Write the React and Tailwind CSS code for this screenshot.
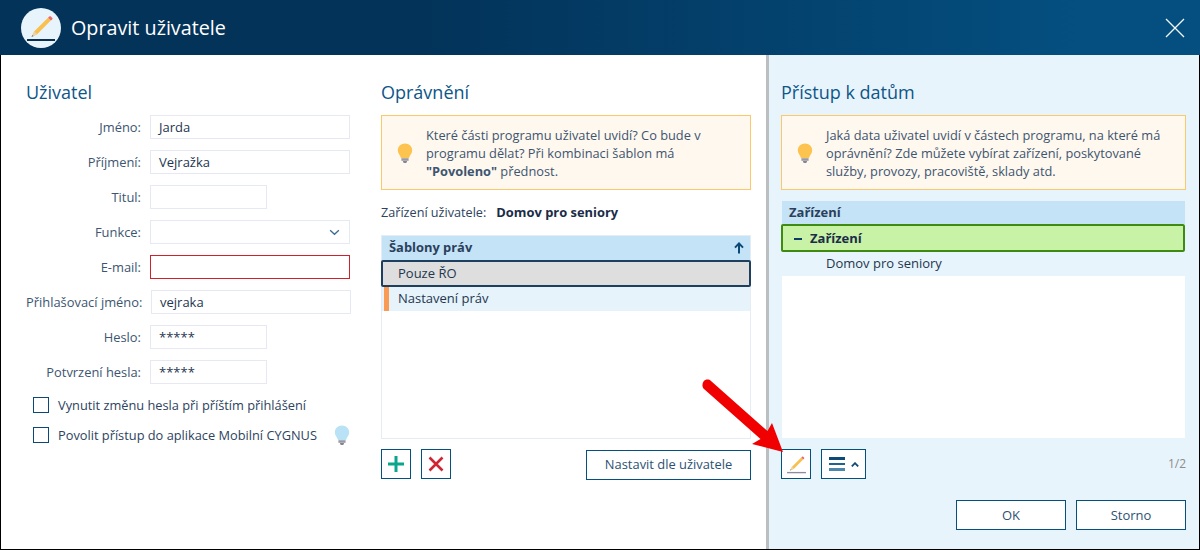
import React from "react";

const Bulb = ({ color = "#fcc34f", className = "" }) => (
  <svg viewBox="0 0 16 21" className={className}>
    <path d="M8 .5C3.8.5.8 3.5.8 7.3c0 3.3 2.4 4.8 3.2 7.7h8c.8-2.9 3.2-4.4 3.2-7.7C15.2 3.5 12.2.5 8 .5z" fill={color} />
    <path d="M4.4 15.2h7.2v2.6H4.4z" fill="#9a9aa6" />
    <path d="M5.8 18h4.4l-.9 2H6.7z" fill="#85858f" />
  </svg>
);

const Pencil = ({ className = "", line = "#8f8aa0", w = 1 }) => (
  <svg viewBox="0 0 40 40" className={className}>
    <path d="M10.5 29l2.8-5.8L27 9.8l2.8 2.8L16.2 26.2z" fill="#f8c04e" />
    <path d="M13.3 23.2l2.9 3L10.5 29z" fill="#e9d6a8" />
    <path d="M10.5 29l.9-2.1 1.2 1.2z" fill="#6b7a8c" />
    <path d="M27 9.8l1.3-1.3c.5-.5 1.1-.5 1.6 0l1.3 1.3c.5.5.5 1.1 0 1.6l-1.4 1.2z" fill="#ee6a6a" />
    <rect x="6" y="31" width="28" height={w + 1} fill={line} />
  </svg>
);

const Label = ({ children }) => (
  <label className="w-[115px] text-right text-[12.9px] leading-6 text-[#3d5570] shrink-0 whitespace-nowrap">{children}</label>
);

const Input = ({ value = "", className = "w-[200px]", ml = "ml-[9px]", red = false, children }) => (
  <div
    className={`${className} ${ml} h-6 border ${red ? "border-[#d0202c]" : "border-[#e6e9f3]"} bg-white pl-2 pr-2 pt-px flex items-center justify-between text-[13px] text-[#24364f]`}
  >
    <span>{value}</span>
    {children}
  </div>
);

const Row = ({ label, ...rest }) => (
  <div className="flex h-6">
    <Label>{label}</Label>
    <Input {...rest} />
  </div>
);

const Check = ({ label, children }) => (
  <div className="flex items-center h-4 ml-[7px]">
    <span className="w-4 h-4 border border-[#0b4a78] bg-white shrink-0" />
    <span className="ml-[9px] text-[12.8px] pt-px text-[#2d4360] whitespace-nowrap">{label}</span>
    {children}
  </div>
);

const Info = ({ children }) => (
  <div className="h-[75px] border border-[#fbc96c] bg-[#fff8ef] flex items-center">
    <Bulb className="w-[16px] h-[21px] ml-[15px] mt-px shrink-0" />
    <p className="ml-[13px] text-[12.8px] leading-[18px] text-[#3d5570] whitespace-nowrap">{children}</p>
  </div>
);

const Heading = ({ children }) => (
  <h2 className="text-[18px] leading-6 text-[#0d5688]">{children}</h2>
);

const IconBtn = ({ className = "w-[30px]", children }) => (
  <button className={`${className} h-[30px] border border-[#04507f] bg-white flex items-center justify-center shrink-0`}>
    {children}
  </button>
);

export default function App() {
  return (
    <div className="w-[1200px] h-[550px] relative overflow-hidden flex flex-col font-['Open_Sans',sans-serif] bg-white">
      <header className="h-[55px] shrink-0 flex items-center bg-gradient-to-r from-[#033359] from-[35%] to-[#044f80] to-[90%] pl-[21px] pr-4">
        <div className="w-10 h-10 rounded-full bg-[#e8f4fb] flex items-center justify-center">
          <Pencil className="w-10 h-10" line="#0b2f4f" w={1} />
        </div>
        <h1 className="ml-[10px] text-[19.75px] text-white leading-none">Opravit uživatele</h1>
        <svg viewBox="0 0 20 20" className="w-5 h-5 ml-auto mr-[-1px]">
          <path d="M1 1l18 18M19 1L1 19" stroke="#f2f7fa" strokeWidth="1.3" fill="none" />
        </svg>
      </header>

      <main className="flex-1 flex border-x border-b border-black min-h-0">
        <div className="w-[765px] shrink-0 flex bg-white">
          <section className="w-[380px] shrink-0 pl-[25px] pt-[25px]">
            <Heading>Uživatel</Heading>
            <div className="mt-[11px] flex flex-col gap-[11px]">
              <Row label="Jméno:" value="Jarda" />
              <Row label="Příjmení:" value="Vejražka" />
              <Row label="Titul:" className="w-[117px]" />
              <Row label="Funkce:">
                <svg viewBox="0 0 12 8" className="w-[11px] h-[7px] mr-px">
                  <path d="M1 1.5l5 4.5 5-4.5" stroke="#3b6b94" strokeWidth="1.5" fill="none" />
                </svg>
              </Row>
              <Row label="E-mail:" red />
              <Row label="Přihlašovací jméno:" value="vejraka" ml="ml-[10px]" />
              <Row label="Heslo:" value="*****" className="w-[117px]" />
              <Row label="Potvrzení hesla:" value="*****" className="w-[117px]" />
            </div>
            <div className="mt-[13px] flex flex-col gap-[14px]">
              <Check label="Vynutit změnu hesla při příštím přihlášení" />
              <Check label="Povolit přístup do aplikace Mobilní CYGNUS">
                <Bulb color="#b9e2f6" className="w-[16px] h-[21px] ml-[17px] shrink-0" />
              </Check>
            </div>
          </section>

          <section className="w-[370px] shrink-0 pt-[25px]">
            <Heading>Oprávnění</Heading>
            <div className="mt-[11px]">
              <Info>
                Které části programu uživatel uvidí? Co bude v<br />
                programu dělat? Při kombinaci šablon má<br />
                <b className="font-bold">"Povoleno"</b> přednost.
              </Info>
            </div>
            <div className="mt-3 h-5 pt-px flex items-center text-[12.65px] text-[#2d4360]">
              <span>Zařízení uživatele:</span>
              <b className="ml-[10px] text-[12.9px] font-bold text-[#1a2c47]">Domov pro seniory</b>
            </div>
            <div className="mt-[13px] h-[204px] border border-[#e6ecf6] bg-white">
              <div className="h-6 bg-[#c4e3f6] flex items-center justify-between pl-[7px] pr-[6px] text-[12.9px] font-bold text-[#2b3f5c]">
                <span>Šablony práv</span>
                <svg viewBox="0 0 10 12" className="w-[10px] h-[12px]">
                  <path d="M5 11.5V2M1 5.6L5 1.4l4 4.2" stroke="#0b4a78" strokeWidth="2" fill="none" />
                </svg>
              </div>
              <div className="h-[27px] -mx-px border-2 border-[#1f3f5f] rounded-[2px] bg-[#dedede] flex items-center pl-[15px] text-[13px] text-[#24364f]">
                Pouze ŘO
              </div>
              <div className="h-6 bg-[#e6f3fb] flex items-center pl-[2px] text-[13px] text-[#24364f]">
                <span className="w-[5px] h-6 bg-[#f99a55]" />
                <span className="ml-[9px]">Nastavení práv</span>
              </div>
            </div>
            <div className="mt-[10px] flex items-start">
              <IconBtn>
                <svg viewBox="0 0 18 18" className="w-[18px] h-[18px]">
                  <path d="M9 1v16M1 9h16" stroke="#0aa58d" strokeWidth="3" fill="none" />
                </svg>
              </IconBtn>
              <IconBtn className="w-[30px] ml-[10px]">
                <svg viewBox="0 0 16 16" className="w-[16px] h-[16px]">
                  <path d="M1.5 1.5l13 13M14.5 1.5l-13 13" stroke="#cf2533" strokeWidth="2.6" fill="none" />
                </svg>
              </IconBtn>
              <button className="ml-auto mt-px w-[165px] h-[30px] border border-[#04507f] bg-white text-[12.9px] text-[#2c5273]">
                Nastavit dle uživatele
              </button>
            </div>
          </section>
        </div>

        <div className="w-[3px] shrink-0 bg-[#bcbfc2]" />

        <section className="flex-1 min-w-0 bg-[#e8f4fb] pl-3 pr-[13px] pt-[25px]">
          <Heading>Přístup k datům</Heading>
          <div className="mt-[11px]">
            <Info>
              Jaká data uživatel uvidí v částech programu, na které má<br />
              oprávnění? Zde můžete vybírat zařízení, poskytované<br />
              služby, provozy, pracoviště, sklady atd.
            </Info>
          </div>
          <div className="mt-[11px] mx-px h-[237px] bg-white">
            <div className="h-[23px] bg-[#c4e3f6] flex items-center pl-[7px] text-[13px] font-bold text-[#2b3f5c]">
              Zařízení
            </div>
            <div className="-ml-px h-[28px] border-2 border-[#3f8a10] rounded-[2px] bg-[#c8f2a6] flex items-center pl-[11px] pt-px text-[13px] font-bold text-[#1a2c47]">
              <span className="w-2 h-[2px] bg-[#0b3a66]" />
              <span className="ml-2">Zařízení</span>
            </div>
            <div className="h-6 bg-[#e8f4fb] flex items-center pl-[44px] text-[13px] text-[#24364f]">
              Domov pro seniory
            </div>
          </div>
          <div className="mt-[11px] flex items-center">
            <IconBtn>
              <Pencil className="w-[27px] h-[27px]" />
            </IconBtn>
            <IconBtn className="w-[45px] ml-[10px]">
              <span className="flex flex-col gap-[3px]">
                <span className="block w-4 h-[2.5px] bg-[#0d4a78]" />
                <span className="block w-4 h-[2.5px] bg-[#1f628f]" />
                <span className="block w-4 h-[2.5px] bg-[#4d86ab]" />
              </span>
              <svg viewBox="0 0 8 5" className="w-[8px] h-[5px] ml-[6px]">
                <path d="M.8 4.4L4 1.2l3.2 3.2" stroke="#0d4a78" strokeWidth="1.8" fill="none" />
              </svg>
            </IconBtn>
            <span className="ml-auto text-[12px] text-[#8c8c8c]">1/2</span>
          </div>
          <div className="mt-[21px] flex justify-end gap-[10px]">
            <button className="w-[110px] h-[30px] pt-px border border-[#04507f] bg-white text-[13px] text-[#2c5273]">OK</button>
            <button className="w-[110px] h-[30px] pt-px border border-[#04507f] bg-white text-[13px] text-[#2c5273]">Storno</button>
          </div>
        </section>
      </main>

      <svg viewBox="0 0 90 80" className="absolute left-[700px] top-[376px] w-[90px] h-[80px] pointer-events-none">
        <path d="M3.5 5.5C5.5 3 9 3 11 5L67.5 55 72 47 83 76 52 68 60.5 63 4 13C2 11 2 8 3.5 5.5z" fill="#f00000" />
      </svg>
    </div>
  );
}
